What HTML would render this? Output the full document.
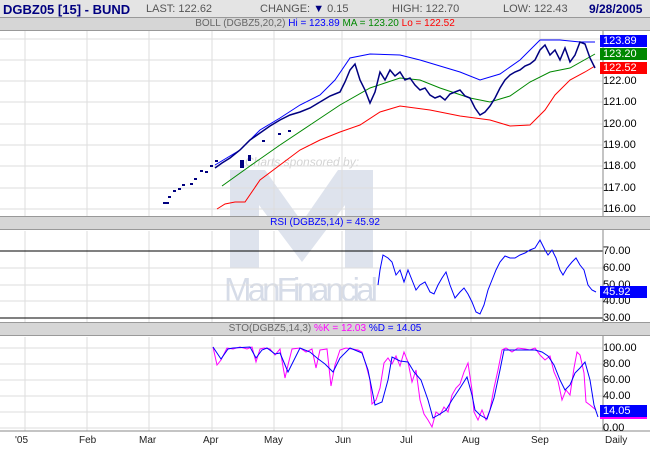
<!DOCTYPE html>
<html><head><style>
body{margin:0;width:650px;height:450px;overflow:hidden;background:#fff;font-family:"Liberation Sans",sans-serif;position:relative}
.a{position:absolute}
.hdr{left:0;top:0;width:650px;height:18px;background:#e4e4e4;font-size:11px;color:#555;z-index:2}
.bar{left:0;width:650px;height:12px;background:#d6d6d6;border-top:1px solid #999;border-bottom:1px solid #999;font-size:10px;color:#666;line-height:12px;text-align:center;z-index:2}
.lab{font-size:11px;color:#000;left:603px;z-index:2}
.box{left:600px;width:47px;height:12px;font-size:11px;color:#fff;line-height:12px;padding-left:3px;box-sizing:border-box;z-index:2}
.xl{top:435px;font-size:10px;color:#222}
</style></head><body>
<div class="a hdr">
<span class="a" style="left:3px;top:2px;font-weight:bold;font-size:13px;color:#000080">DGBZ05 [15] - BUND</span>
<span class="a" style="left:146px;top:3px">LAST: 122.62</span>
<span class="a" style="left:260px;top:3px">CHANGE: <span style="color:#000080">&#9660;</span> 0.15</span>
<span class="a" style="left:392px;top:3px">HIGH: 122.70</span>
<span class="a" style="left:503px;top:3px">LOW: 122.43</span>
<span class="a" style="left:589px;top:2px;font-weight:bold;font-size:12px;color:#000080">9/28/2005</span>
</div>
<div class="a bar" style="top:17px">BOLL (DGBZ5,20,2) <span style="color:#00f">Hi = 123.89</span> <span style="color:#080">MA = 123.20</span> <span style="color:#f00">Lo = 122.52</span></div>
<div class="a bar" style="top:216px;color:#00f">RSI (DGBZ5,14) = 45.92</div>
<div class="a bar" style="top:322px">STO(DGBZ5,14,3) <span style="color:#f0f">%K = 12.03</span> <span style="color:#00f">%D = 14.05</span></div>
<svg class="a" style="left:0;top:0;z-index:1" width="650" height="450">
<!-- watermark -->
<g fill="#dee3ed">
<path d="M230 170 H265 L302 222 L338 170 H373 V268 H345 V205 L302 262 L259 205 V268 H230Z"/>
</g>
<text x="245" y="166" font-size="12" font-style="italic" fill="#d4d4d4" font-family="Liberation Sans">Charts sponsored by:</text>
<text x="224" y="301" font-size="33" fill="#d6dce8" font-family="Liberation Sans" textLength="154">ManFinancial</text>
<g stroke="#ddd" stroke-width="1">
<line x1="25" y1="31" x2="25" y2="216"/><line x1="87" y1="31" x2="87" y2="216"/><line x1="149" y1="31" x2="149" y2="216"/><line x1="212" y1="31" x2="212" y2="216"/><line x1="274" y1="31" x2="274" y2="216"/><line x1="342" y1="31" x2="342" y2="216"/><line x1="406" y1="31" x2="406" y2="216"/><line x1="471" y1="31" x2="471" y2="216"/><line x1="540" y1="31" x2="540" y2="216"/>
<line x1="25" y1="231" x2="25" y2="322"/><line x1="87" y1="231" x2="87" y2="322"/><line x1="149" y1="231" x2="149" y2="322"/><line x1="212" y1="231" x2="212" y2="322"/><line x1="274" y1="231" x2="274" y2="322"/><line x1="342" y1="231" x2="342" y2="322"/><line x1="406" y1="231" x2="406" y2="322"/><line x1="471" y1="231" x2="471" y2="322"/><line x1="540" y1="231" x2="540" y2="322"/>
<line x1="25" y1="337" x2="25" y2="431"/><line x1="87" y1="337" x2="87" y2="431"/><line x1="149" y1="337" x2="149" y2="431"/><line x1="212" y1="337" x2="212" y2="431"/><line x1="274" y1="337" x2="274" y2="431"/><line x1="342" y1="337" x2="342" y2="431"/><line x1="406" y1="337" x2="406" y2="431"/><line x1="471" y1="337" x2="471" y2="431"/><line x1="540" y1="337" x2="540" y2="431"/>
<line x1="0" y1="39" x2="603" y2="39"/><line x1="0" y1="60" x2="603" y2="60"/><line x1="0" y1="81" x2="603" y2="81"/><line x1="0" y1="102" x2="603" y2="102"/><line x1="0" y1="124" x2="603" y2="124"/><line x1="0" y1="145" x2="603" y2="145"/><line x1="0" y1="166" x2="603" y2="166"/><line x1="0" y1="188" x2="603" y2="188"/><line x1="0" y1="209" x2="603" y2="209"/>
<line x1="0" y1="268" x2="603" y2="268"/><line x1="0" y1="285" x2="603" y2="285"/><line x1="0" y1="301" x2="603" y2="301"/>
<line x1="0" y1="348" x2="603" y2="348"/><line x1="0" y1="364" x2="603" y2="364"/><line x1="0" y1="380" x2="603" y2="380"/><line x1="0" y1="396" x2="603" y2="396"/><line x1="0" y1="412" x2="603" y2="412"/><line x1="0" y1="428" x2="603" y2="428"/>
</g>
<line x1="0" y1="251" x2="603" y2="251" stroke="#000"/><line x1="0" y1="318" x2="603" y2="318" stroke="#000"/>
<line x1="603" y1="31" x2="603" y2="431" stroke="#888"/>
<line x1="0" y1="431" x2="650" y2="431" stroke="#888"/>
<!-- boll -->
<polyline fill="none" stroke="#00f" points="215,165 240,150 260,130 280,118 300,105 320,95 335,80 350,58 370,54 400,55 420,60 440,66 460,72 480,80 500,74 520,60 540,40 560,40 580,42 595,42"/>
<polyline fill="none" stroke="#080" points="222,186 250,166 280,145 310,125 340,105 370,88 400,78 420,80 440,88 470,98 490,102 510,96 530,82 550,72 570,68 595,54"/>
<polyline fill="none" stroke="#f00" points="217,209 225,204 235,202 245,202 260,180 280,165 300,150 320,140 340,132 360,125 380,112 400,106 430,110 460,116 490,120 510,126 530,125 545,110 555,95 570,80 585,72 595,66"/>
<polyline fill="none" stroke="#000080" stroke-width="1.5" points="215,168 222,163 230,158 240,150 250,140 260,133 270,126 280,120 290,115 300,112 310,108 320,102 330,96 340,92 345,82 350,70 355,64 360,80 365,90 370,103 375,92 380,72 385,80 390,70 395,76 400,72 405,80 410,78 415,85 420,90 425,88 430,95 435,98 440,96 445,100 450,94 455,92 460,90 465,96 470,98 475,108 480,115 485,112 490,106 495,98 500,88 505,80 510,75 515,72 520,70 525,66 530,64 535,60 540,50 545,45 550,55 555,50 560,60 565,48 570,62 575,55 580,42 585,44 590,58 595,68"/>
<g fill="#000080">
<rect x="163" y="202" width="6" height="2"/><rect x="168" y="196" width="3" height="2"/><rect x="173" y="190" width="3" height="2"/><rect x="178" y="188" width="3" height="2"/><rect x="182" y="184" width="3" height="2"/><rect x="190" y="183" width="3" height="2"/><rect x="194" y="178" width="3" height="2"/><rect x="200" y="170" width="3" height="2"/><rect x="205" y="171" width="3" height="2"/><rect x="210" y="165" width="3" height="2"/><rect x="215" y="160" width="3" height="2"/>
<rect x="240" y="160" width="4" height="8"/><rect x="248" y="155" width="3" height="6"/><rect x="262" y="140" width="3" height="2"/><rect x="278" y="133" width="3" height="2"/><rect x="288" y="130" width="3" height="2"/>
</g>
<!-- rsi -->
<polyline fill="none" stroke="#00f" points="378,285 380,270 383,255 388,258 392,262 396,275 400,270 404,282 408,270 412,280 416,290 420,285 425,282 430,292 434,294 438,285 442,278 446,272 450,285 455,298 460,292 464,288 468,294 472,302 476,312 480,314 484,305 488,290 492,280 496,270 500,262 505,256 510,258 515,258 520,255 525,253 530,250 535,248 540,240 545,250 548,255 552,250 556,258 560,270 563,275 567,268 572,262 576,258 580,265 584,270 588,285 592,290 596,292"/>
<!-- sto -->
<polyline fill="none" stroke="#f0f" points="213,347 217,365 221,360 227,348 233,349 240,347 247,349 252,347 256,362 260,349 264,348 270,349 275,355 280,349 285,378 288,365 292,349 300,348 306,352 312,349 316,368 320,350 327,349 331,386 335,365 340,350 346,348 352,349 358,350 362,352 366,365 370,380 372,404 376,400 380,388 384,363 388,358 392,364 396,356 400,366 404,352 408,362 412,382 416,370 420,400 424,414 428,420 432,427 436,412 440,415 444,407 448,412 452,395 456,388 460,384 464,372 468,363 472,390 474,412 478,420 482,410 486,420 490,410 494,388 498,370 502,350 506,348 512,352 518,348 525,349 530,350 535,348 540,355 545,360 550,356 554,372 558,381 562,400 566,390 570,395 574,368 577,352 580,355 584,373 586,402 590,405 596,410"/>
<polyline fill="none" stroke="#00f" points="213,347 221,359 228,349 233,348 250,347 256,358 262,350 267,348 275,354 280,353 288,372 294,360 300,348 310,352 317,358 325,364 333,372 340,358 350,348 362,353 368,370 375,405 382,402 388,380 392,357 400,361 408,362 414,372 421,380 428,400 433,418 440,414 446,410 452,400 460,388 467,377 472,395 475,410 480,415 487,419 494,398 500,370 504,350 515,350 525,350 535,350 542,352 548,356 554,365 560,380 565,390 570,385 575,373 580,368 585,362 590,380 594,405 598,417"/>
</svg>
<div class="a box" style="top:35px;background:#00f">123.89</div>
<div class="a box" style="top:48px;background:#080">123.20</div>
<div class="a box" style="top:62px;background:#f00">122.52</div>
<div class="a lab" style="top:75px">122.00</div><div class="a lab" style="top:96px">121.00</div><div class="a lab" style="top:118px">120.00</div><div class="a lab" style="top:139px">119.00</div><div class="a lab" style="top:160px">118.00</div><div class="a lab" style="top:182px">117.00</div><div class="a lab" style="top:203px">116.00</div>
<div class="a lab" style="top:245px">70.00</div><div class="a lab" style="top:262px">60.00</div><div class="a lab" style="top:279px">50.00</div><div class="a lab" style="top:295px">40.00</div><div class="a lab" style="top:312px">30.00</div>
<div class="a box" style="top:286px;background:#00f">45.92</div>
<div class="a lab" style="top:342px">100.00</div><div class="a lab" style="top:358px">80.00</div><div class="a lab" style="top:374px">60.00</div><div class="a lab" style="top:390px">40.00</div><div class="a lab" style="top:422px">0.00</div>
<div class="a box" style="top:405px;background:#00f;border-bottom:2px solid #f0f;height:14px">14.05</div>
<div class="a xl" style="left:15px">'05</div><div class="a xl" style="left:79px">Feb</div><div class="a xl" style="left:139px">Mar</div><div class="a xl" style="left:203px">Apr</div><div class="a xl" style="left:264px">May</div><div class="a xl" style="left:335px">Jun</div><div class="a xl" style="left:400px">Jul</div><div class="a xl" style="left:462px">Aug</div><div class="a xl" style="left:531px">Sep</div><div class="a xl" style="left:605px">Daily</div>
</body></html>
